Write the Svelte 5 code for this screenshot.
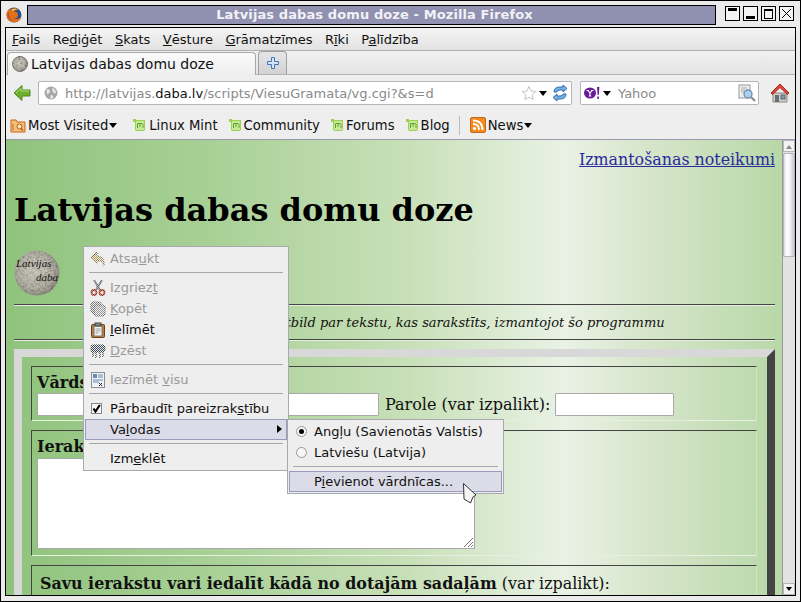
<script>
  const menu = ['Fails', 'Rediģēt', 'Skats', 'Vēsture', 'Grāmatzīmes', 'Rīki', 'Palīdzība'];
  const under = [0, 2, 0, 0, 0, 1, 1];
  const marks = ['Linux Mint', 'Community', 'Forums', 'Blog'];
</script>

<div class="screen">
  <svg width="0" height="0" class="defs">
    <defs>
      <pattern id="dith" width="2" height="2" patternUnits="userSpaceOnUse">
        <rect width="1" height="1" fill="#eee" />
        <rect x="1" y="1" width="1" height="1" fill="#eee" />
      </pattern>
      <radialGradient id="stone" cx="45%" cy="45%" r="60%">
        <stop offset="0" stop-color="#cfccc2" />
        <stop offset="0.65" stop-color="#b4b1a5" />
        <stop offset="1" stop-color="#85837a" />
      </radialGradient>
      <filter id="speckle" x="0" y="0" width="100%" height="100%">
        <feTurbulence type="fractalNoise" baseFrequency="0.45" numOctaves="2" seed="4" />
        <feColorMatrix values="0 0 0 0 0.3  0 0 0 0 0.29  0 0 0 0 0.25  1.500 0 0 0 -0.600" />
        <feComposite in2="SourceGraphic" operator="in" />
        <feBlend in2="SourceGraphic" mode="multiply" />
      </filter>
    </defs>
  </svg>

  <div class="titlebar">
    <svg class="ff" width="16" height="16" viewBox="0 0 16 16">
      <circle cx="8" cy="8" r="7.500" fill="#27508f" />
      <path d="M1.500 11.500C-.5 7.500 1 3 4.500 1c-.6 1-.6 1.800-.4 2.400C6 1.200 10.500.2 13.500 3c-2.500-.6-4.500 0-5.500 1.200 2.500 0 4 1.700 4 3.800 0 2.600-2.200 4-4.500 3.700 2.300 1 5.500.6 7.700-2.200-.4 3.700-3.400 5.800-7 5.800-3 0-5.200-1.300-6.700-3.800z" fill="#e4701a" />
      <path d="M3 5c-1 3 .5 7 4.500 8.500C4.500 13.500 1.500 10.500 1.500 7 1.700 6 2.300 5.500 3 5z" fill="#b8481a" />
      <path d="M5 2.500c2-1 5-1.200 7 0-2-.2-4 .4-5 1.500C6 3.500 5.500 3 5 2.500z" fill="#f8c63c" />
    </svg>
    <div class="title">Latvijas dabas domu doze - Mozilla Firefox</div>
    <div class="winbtns">
      <span class="wb"><i class="shade"></i></span>
      <span class="wb"><i class="mini"></i></span>
      <span class="wb"><i class="maxi"></i></span>
      <span class="wb">
        <svg width="13" height="13" viewBox="0 0 13 13"><path d="M2 2l9 9M11 2l-9 9" stroke="#000" stroke-width="1" fill="none" /></svg>
      </span>
    </div>
  </div>

  <div class="window">
    <div class="menubar">
      {#each menu as m, i}
        <span>{m.slice(0, under[i])}<u>{m[under[i]]}</u>{m.slice(under[i] + 1)}</span>
      {/each}
    </div>

    <div class="tabs">
      <div class="tab">
        <svg width="16" height="16" viewBox="0 0 16 16"><circle cx="8" cy="8" r="7.500" fill="url(#stone)" stroke="#7c7c74" filter="url(#speckle)" /></svg>
        <span>Latvijas dabas domu doze</span>
      </div>
      <div class="newtab">
        <svg width="14" height="14" viewBox="0 0 14 14"><path d="M5.500 1.500h3v4h4v3h-4v4h-3v-4h-4v-3h4z" fill="#d5e3f4" stroke="#3f78b8" /></svg>
      </div>
    </div>

    <div class="navbar">
      <svg class="back" width="18" height="18" viewBox="0 0 18 18"><path d="M1 9l8-7.500V6h8v6H9v4.500z" fill="#6fae2c" stroke="#4c8a20" /><path d="M3 9l5-4.500V7h8" fill="none" stroke="#b5dc7a" /></svg>
      <div class="urlbar">
        <svg width="16" height="16" viewBox="0 0 16 16"><circle cx="8" cy="8" r="6.500" fill="#a8a8a8" /><path d="M4 4q3 0 3 2T5 9 4 4zM9 3q4 1 4 5-2 1-3-1t-1-4zM8 10q3 0 2 3-2 1-3 0z" fill="#e6e6e6" /></svg>
        <span class="url">http://latvijas.<b>daba.lv</b>/scripts/ViesuGramata/vg.cgi?&amp;s=d</span>
        <svg class="star" width="16" height="16" viewBox="0 0 16 16"><path d="M8 1.500l2 4.500 4.800.5-3.600 3.200 1 4.800L8 12.200 3.800 14.500l1-4.800L1.200 6.500 6 6z" fill="#fff" stroke="#c4c4c4" /></svg>
        <span class="caret"></span>
        <svg class="reload" width="16" height="18" viewBox="0 0 16 18"><path d="M2 8q0-5 6-5h3V1l4 3.500L11 8V6H8Q5 6 5 8z" fill="#7ab0e0" stroke="#2f6fb0" /><path d="M14 10q0 5-6 5H5v2l-4-3.500L5 10v2h3q3 0 3-2z" fill="#7ab0e0" stroke="#2f6fb0" /></svg>
      </div>
      <div class="search">
        <svg width="16" height="14" viewBox="0 0 16 14"><ellipse cx="6" cy="7" rx="6" ry="5.500" fill="#6a1b9a" /><path d="M2.500 4.500h2.500M7 4.500h2.500M4 4.500L6 7l2-2.500M6 7v3M4.800 10h2.400" stroke="#fff" stroke-width="1.200" fill="none" /><path d="M13 1h2.400l-.6 8h-1.200zM13.300 10.500h1.600V13h-1.600z" fill="#6a1b9a" /></svg>
        <span class="caret"></span>
        <span class="engine">Yahoo</span>
        <svg class="lens" width="18" height="18" viewBox="0 0 18 18"><rect x="1" y="1" width="11" height="13" fill="#eee" stroke="#999" /><path d="M3 4h6M3 6h4M3 8h3" stroke="#aaa" /><circle cx="10" cy="10" r="4" fill="#a9d0ee" stroke="#6d8fae" stroke-width="1.300" /><path d="M13 13l4 4" stroke="#888" stroke-width="2" /></svg>
      </div>
      <svg class="home" width="20" height="20" viewBox="0 0 20 20"><path d="M3 10h14v9H3z" fill="#cfcfc8" stroke="#8a8a84" /><rect x="5" y="12" width="4" height="7" fill="#6c7074" /><rect x="11" y="12" width="4" height="4" fill="#7f9ab4" stroke="#666" /><path d="M10 1L1 10l1.500 1.500L10 4.500l7.500 7L19 10z" fill="#e2453a" stroke="#a8231c" /></svg>
    </div>

    <div class="bookmarks">
      <svg width="16" height="16" viewBox="0 0 16 16"><path d="M1 3h5l1 2h8v10H1z" fill="#f4c078" stroke="#c8641c" /><circle cx="9.500" cy="9.500" r="2.500" fill="#fbe4bc" stroke="#b8581c" /><path d="M11 11.500l2 2" stroke="#b8581c" stroke-width="1.400" /><path d="M3 7v6" stroke="#c8641c" /></svg>
      <span class="bm first">Most Visited</span><span class="caret"></span>
      {#each marks as m, i}
        <span class="mark" class:lead={i === 0}>
          <svg width="14" height="14" viewBox="0 0 14 14"><path d="M1 1h3v1h9v9q0 2-2 2H5q-2 0-2-2V4H1z" fill="#9bd14f" /><path d="M4 3h8v8q0 1-1 1H5q-1 0-1-1z" fill="#c9e99a" /><path d="M5.500 10V5.500h4.500q1 0 1 1V10M8 5.500V9" stroke="#5aa528" stroke-width="1" fill="none" /></svg>
          {m}
        </span>
      {/each}
      <span class="divider"></span>
      <svg width="16" height="16" viewBox="0 0 16 16"><rect x="0.500" y="0.500" width="15" height="15" rx="1.500" fill="#f28c1e" stroke="#c8641c" /><circle cx="4.500" cy="11.500" r="1.600" fill="#fff" /><path d="M3 7q6 0 6 6M3 3.500q9.500 0 9.500 9.500" stroke="#fff" stroke-width="1.800" fill="none" /></svg>
      <span class="bm">News</span><span class="caret"></span>
    </div>

    <div class="content">
      <div class="page">
        <div class="terms"><a href="#top">Izmantošanas noteikumi</a></div>
        <h1>Latvijas dabas domu doze</h1>
        <svg class="logo" width="46" height="46" viewBox="0 0 46 46">
          <circle cx="23" cy="23" r="22.500" fill="url(#stone)" filter="url(#speckle)" />
          <text x="2" y="17" class="logotext">Latvijas</text>
          <text x="22" y="31" class="logotext">daba</text>
        </svg>
        <hr />
        <p class="note">Programmas autors neatbild par tekstu, kas sarakstīts, izmantojot šo programmu</p>
        <hr />
        <form>
          <fieldset class="f1">
            <div class="lbl"><b>Vārds</b></div>
            <div class="row">
              <span class="input name"></span>
              <span class="pw">Parole (var izpalikt):</span>
              <span class="input pass"></span>
            </div>
          </fieldset>
          <fieldset class="f2">
            <div class="lbl"><b>Ieraksts</b></div>
            <div class="textarea">
              <svg width="11" height="11" viewBox="0 0 11 11"><path d="M10 1L1 10M10 5l-5 5M10 8l-2 2" stroke="#777" fill="none" /></svg>
            </div>
          </fieldset>
          <fieldset class="f3">
            <div class="lbl"><b>Savu ierakstu vari iedalīt kādā no dotajām sadaļām</b> (var izpalikt):</div>
          </fieldset>
        </form>
      </div>

      <div class="scrollbar">
        <span class="sbtn"><i class="up"></i></span>
        <span class="thumb"></span>
        <span class="track"></span>
        <span class="sbtn"><i class="down"></i></span>
      </div>
    </div>
  </div>

  <div class="ctx main">
    <div class="item off">
      <svg viewBox="0 0 16 16" width="16" height="16"><path d="M7 1L1 7l6 5.500V9q4 0 7 5.500Q15 6 7 5z" fill="#b09a50" stroke="#7a6a34" /><rect width="16" height="16" fill="url(#dith)" /></svg>
      <span>Atsa<u>u</u>kt</span>
    </div>
    <div class="sep"></div>
    <div class="item off">
      <svg viewBox="0 0 16 16" width="16" height="16"><path d="M4 0l6 10M12 0L6 10" stroke="#6c6c6c" stroke-width="2" /><circle cx="4" cy="12.500" r="2.500" fill="none" stroke="#98301c" stroke-width="1.800" /><circle cx="12" cy="12.500" r="2.500" fill="none" stroke="#98301c" stroke-width="1.800" /><rect width="16" height="16" fill="url(#dith)" opacity="0.500" /></svg>
      <span>Izgriez<u>t</u></span>
    </div>
    <div class="item off">
      <svg viewBox="0 0 16 16" width="16" height="16"><rect x="1" y="1" width="10" height="11" rx="2" fill="#888" stroke="#555" /><rect x="4" y="4" width="11" height="11" rx="2" fill="#999" stroke="#555" /><rect width="16" height="16" fill="url(#dith)" /></svg>
      <span><u>K</u>opēt</span>
    </div>
    <div class="item">
      <svg viewBox="0 0 16 16" width="16" height="16"><rect x="1.500" y="2.500" width="13" height="13" rx="1" fill="#b87c38" stroke="#6e4014" /><rect x="4" y="4" width="8" height="10" fill="#f4f4f0" stroke="#777" /><rect x="5" y="1" width="6" height="3" fill="#888" stroke="#444" /><path d="M5.500 7h5M5.500 9h5M5.500 11h3" stroke="#999" /></svg>
      <span><u>I</u>elīmēt</span>
    </div>
    <div class="item off">
      <svg viewBox="0 0 16 16" width="16" height="16"><rect x="1" y="2" width="14" height="7" rx="2" fill="#3a4a60" stroke="#333" /><path d="M3 9v5M6 9v6M10 9v6M13 9v5" stroke="#444" stroke-width="1.500" /><rect width="16" height="16" fill="url(#dith)" /></svg>
      <span><u>D</u>zēst</span>
    </div>
    <div class="sep"></div>
    <div class="item off">
      <svg viewBox="0 0 16 16" width="16" height="16"><rect x="1.500" y="0.500" width="13" height="15" fill="#eef2f6" stroke="#8a9098" /><rect x="3" y="2" width="4" height="4" fill="#6a8ab0" /><path d="M8 3h5M8 5h5M3 8h10M3 10h6" stroke="#6a8ab0" /><path d="M9 11l3 3M12 11l-3 3" stroke="#222" /></svg>
      <span>Iezīmēt <u>v</u>isu</span>
    </div>
    <div class="sep"></div>
    <div class="item">
      <span class="check">
        <svg width="9" height="9" viewBox="0 0 9 9"><path d="M1.500 4.500l2 3L7.800 1" stroke="#000" stroke-width="2.200" fill="none" /></svg>
      </span>
      <span>Pārbaudīt pareizrak<u>s</u>tību</span>
    </div>
    <div class="item active">
      <span class="blank"></span>
      <span>Va<u>l</u>odas</span>
      <i class="arrow"></i>
    </div>
    <div class="sep"></div>
    <div class="item">
      <span class="blank"></span>
      <span>Izm<u>e</u>klēt</span>
    </div>
  </div>

  <div class="ctx sub">
    <div class="item">
      <span class="radio on"></span>
      <span>Angļu (Savienotās Valstis)</span>
    </div>
    <div class="item">
      <span class="radio"></span>
      <span>Latviešu (Latvija)</span>
    </div>
    <div class="sep"></div>
    <div class="item active">
      <span class="radio none"></span>
      <span>P<u>i</u>evienot vārdnīcas...</span>
    </div>
  </div>

  <svg class="cursor" width="16" height="23" viewBox="0 0 16 23">
    <path d="M1.500 1.500L14 13l-3 2-2.500 6L2 17z" fill="#f4f4f4" stroke="#333" stroke-width="1" stroke-linejoin="round" />
  </svg>
</div>

<style>
  :global(body) {
    background: #e8e8e8;
  }

  .screen {
    position: relative;
    box-sizing: border-box;
    width: 801px;
    height: 602px;
    overflow: hidden;
    background: #ebebeb;
    border: 1px solid #000;
    font-family: "DejaVu Sans", sans-serif;
    font-size: 13px;
    color: #111;
  }

  .defs {
    position: absolute;
  }

  .titlebar {
    display: flex;
    align-items: flex-start;
    height: 26px;
    padding: 4px 5px 0 5px;
    box-sizing: border-box;
  }

  .ff {
    margin-top: 2px;
    margin-right: 5px;
  }

  .title {
    box-sizing: border-box;
    width: 689px;
    height: 20px;
    margin-right: 9px;
    padding-left: 6px;
    background: #9090b0;
    border: 1px solid #000;
    color: #f2f2f6;
    font-weight: bold;
    font-size: 13px;
    letter-spacing: 0.1px;
    line-height: 18px;
    text-align: center;
  }

  .winbtns {
    display: flex;
    gap: 3px;
  }

  .wb {
    position: relative;
    display: block;
    box-sizing: border-box;
    width: 15px;
    height: 15px;
    margin-top: 1px;
    background: #f4f4f4;
    border: 1px solid #000;
  }

  .wb svg {
    display: block;
  }

  .shade {
    display: block;
    height: 3px;
    margin: 1px 2px;
    background: #000;
  }

  .mini {
    position: absolute;
    left: 2px;
    right: 2px;
    bottom: 1px;
    height: 3px;
    background: #000;
  }

  .maxi {
    display: block;
    height: 7px;
    margin: 2px;
    border: 1px solid #000;
    border-top-width: 2px;
  }

  .window {
    box-sizing: border-box;
    height: 569px;
    margin: 0 4px;
    border: 1px solid #000;
    background: #eee;
    display: flex;
    flex-direction: column;
  }

  .menubar {
    display: flex;
    gap: 12.500px;
    height: 23px;
    box-sizing: border-box;
    padding: 3px 0 0 6px;
    line-height: 17px;
    background: linear-gradient(#f4f4f4, #e2e2e2);
    border-bottom: 1px solid #b0b0b0;
    font-size: 13px;
  }

  .tabs {
    display: flex;
    align-items: flex-end;
    gap: 2px;
    height: 24px;
    padding-left: 1px;
    background: linear-gradient(#f0f0f0, #e4e4e4);
    border-bottom: 1px solid #b4b4b4;
    box-sizing: border-box;
  }

  .tab {
    box-sizing: border-box;
    display: flex;
    align-items: center;
    gap: 3px;
    width: 249px;
    height: 23px;
    padding: 0 0 1px 4px;
    background: linear-gradient(#fafafa, #eee);
    border: 1px solid #a8a8a8;
    border-bottom: none;
    border-radius: 4px 4px 0 0;
    font-size: 14px;
    margin-bottom: -1px;
  }

  .newtab {
    box-sizing: border-box;
    display: flex;
    align-items: center;
    justify-content: center;
    width: 29px;
    height: 23px;
    background: linear-gradient(#e6e6e6, #d2d2d2);
    border: 1px solid #a0a0a0;
    border-bottom: none;
    border-radius: 4px 4px 0 0;
  }

  .navbar {
    display: flex;
    align-items: center;
    height: 36px;
    padding-left: 7px;
    box-sizing: border-box;
  }

  .back {
    margin-right: 7px;
  }

  .urlbar,
  .search {
    box-sizing: border-box;
    display: flex;
    align-items: center;
    height: 24px;
    background: #fff;
    border: 1px solid #b4b4bc;
    border-radius: 2px;
  }

  .urlbar {
    width: 534px;
    padding: 0 3px 0 4px;
    margin-right: 8px;
  }

  .url {
    margin-left: 6px;
    flex: 1;
    color: #8a8a8a;
    font-size: 13px;
    white-space: nowrap;
  }

  .url b {
    color: #111;
    font-weight: normal;
  }

  .star {
    margin-right: 2px;
  }

  .reload {
    margin-left: 5px;
  }

  .caret {
    display: inline-block;
    width: 0;
    height: 0;
    border: 4.500px solid transparent;
    border-top: 5px solid #000;
    border-bottom: none;
  }

  .search {
    width: 179px;
    padding: 0 2px 0 3px;
    margin-right: 11px;
  }

  .search .caret {
    margin-left: 3px;
  }

  .engine {
    margin-left: 7px;
    flex: 1;
    color: #8a8a8a;
    font-size: 13px;
  }

  .bookmarks {
    display: flex;
    align-items: center;
    height: 29px;
    padding-left: 4px;
    border-bottom: 1px solid #9a9aa8;
    box-sizing: border-box;
    font-size: 13.200px;
  }

  .bm {
    margin-left: 2px;
    margin-right: 1px;
  }

  .mark {
    display: inline-flex;
    align-items: center;
    gap: 2px;
    margin-left: 10px;
  }

  .mark.lead {
    gap: 3px;
    margin-left: 15px;
  }

  .divider {
    width: 1px;
    height: 19px;
    margin: 0 10px 0 9px;
    background: #bcbcbc;
  }

  .content {
    flex: 1;
    min-height: 0;
    display: flex;
  }

  .page {
    flex: 1;
    min-width: 0;
    overflow: hidden;
    padding: 10px 7px 0 8px;
    background: linear-gradient(90deg, #8fc37c 0, #a8d096 26%, #c8e0b8 52%, #e9f2e5 72%, #d8e6cc 82%, #b8d8a8 100%);
    font-family: "DejaVu Serif", serif;
    font-size: 16px;
    color: #111;
  }

  .terms {
    text-align: right;
    line-height: 19px;
    font-size: 15.850px;
  }

  .terms a {
    color: #2a2a9c;
  }

  h1 {
    margin: 22px 0 0;
    font-size: 32px;
    line-height: 38px;
    color: #000;
  }

  .logo {
    display: block;
    margin-top: 21px;
  }

  .logotext {
    font-family: "Liberation Serif", serif;
    font-style: italic;
    font-size: 11px;
    fill: #111;
  }

  hr {
    height: 0;
    margin: 0;
    border: none;
    border-top: 1px solid #444;
    border-bottom: 1px solid #e6eee0;
  }

  .logo + hr {
    margin-top: 8px;
  }

  .note {
    margin: 0;
    height: 33px;
    padding-left: 3px;
    font-style: italic;
    font-size: 13px;
    line-height: 34px;
    text-align: center;
  }

  form {
    box-sizing: border-box;
    margin: 8px 0 0;
    height: 260px;
    padding: 9px 10px 0 9px;
    border: 8px solid;
    border-color: #d8d8d8 #444 #444 #d8d8d8;
    border-bottom: none;
  }

  fieldset {
    box-sizing: border-box;
    margin: 0 0 9px;
    min-width: 0;
    padding: 5px 6px 0 5px;
    border: 1px solid;
    border-color: #444 rgba(255, 255, 255, 0.3) #e6efe0 #444;
  }

  .f1 {
    height: 55px;
  }

  .f2 {
    height: 126px;
  }

  .f3 {
    height: 60px;
    padding-top: 8px;
    padding-left: 8px;
    margin-bottom: 0;
    font-size: 15.900px;
  }

  .f1 .lbl,
  .f2 .lbl {
    height: 21px;
    line-height: 21px;
    white-space: nowrap;
  }

  .row {
    display: flex;
    align-items: center;
    gap: 5px;
  }

  .pw {
    margin-left: 1px;
  }

  .input {
    box-sizing: border-box;
    display: block;
    height: 23px;
    background: #fff;
    border: 1px solid #a8a8a8;
    border-radius: 1px;
  }

  .input.name {
    width: 342px;
  }

  .input.pass {
    width: 119px;
  }

  .textarea {
    box-sizing: border-box;
    position: relative;
    width: 438px;
    height: 91px;
    margin-top: 1px;
    background: #fff;
    border: 1px solid #a8a8a8;
  }

  .textarea svg {
    position: absolute;
    right: 0;
    bottom: 0;
  }

  .scrollbar {
    width: 13px;
    display: flex;
    flex-direction: column;
    background: #e2e2e2;
    border-left: 1px solid #9a9a9a;
    box-sizing: border-box;
  }

  .sbtn {
    position: relative;
    display: block;
    box-sizing: border-box;
    height: 12px;
    background: #f2f2f2;
    border: 1px solid #b4b4bc;
  }

  .up,
  .down {
    position: absolute;
    left: 2px;
    top: 3px;
    width: 0;
    height: 0;
    border: 3px solid transparent;
  }

  .up {
    top: 1px;
    border-bottom: 4px solid #888;
  }

  .down {
    top: 3px;
    border-top: 4px solid #000;
  }

  .thumb {
    display: block;
    box-sizing: border-box;
    height: 104px;
    margin-top: 1px;
    background: linear-gradient(90deg, #dcdce4, #fff 30%, #f2f2f4 60%, #c8c8d0);
    border: 1px solid #b4b4bc;
    border-radius: 1px;
  }

  .track {
    flex: 1;
  }

  .ctx {
    position: absolute;
    box-sizing: border-box;
    background: #eee;
    border: 1px solid #a8a8b0;
    padding: 0 1px;
    font-size: 13px;
    color: #111;
  }

  .main {
    left: 82px;
    top: 245px;
    width: 206px;
    height: 225px;
    padding-top: 1px;
  }

  .sub {
    left: 286px;
    top: 418px;
    width: 217px;
    height: 75px;
    padding-top: 1px;
  }

  .item {
    position: relative;
    box-sizing: border-box;
    display: flex;
    align-items: center;
    gap: 4px;
    height: 21px;
    padding-left: 5px;
    white-space: nowrap;
  }

  .item.off {
    color: #9a9a9a;
  }

  .item.active {
    background: #dcdce8;
    border: 1px solid #9a9abc;
    padding-left: 4px;
  }

  .blank {
    width: 16px;
    flex: none;
  }

  .item svg {
    flex: none;
  }

  .sep {
    height: 1px;
    margin: 3px 4px 4px;
    background: #a8a8a8;
  }

  .check {
    box-sizing: border-box;
    display: flex;
    align-items: center;
    justify-content: center;
    width: 11px;
    height: 11px;
    margin: 0 4px 0 1px;
    background: #f6f6f6;
    border: 1px solid #888;
  }

  .arrow {
    position: absolute;
    right: 4px;
    top: 5px;
    width: 0;
    height: 0;
    border: 4px solid transparent;
    border-left: 5px solid #000;
    border-right: none;
  }

  .radio {
    box-sizing: border-box;
    position: relative;
    display: block;
    width: 11px;
    height: 11px;
    margin: 0 3px 0 2px;
    background: #f6f6f6;
    border: 1px solid #999;
    border-radius: 50%;
  }

  .radio.none {
    visibility: hidden;
  }

  .radio.on::after {
    content: "";
    position: absolute;
    left: 2px;
    top: 2px;
    width: 5px;
    height: 5px;
    background: #000;
    border-radius: 50%;
  }

  .cursor {
    position: absolute;
    left: 461px;
    top: 481px;
  }
</style>
